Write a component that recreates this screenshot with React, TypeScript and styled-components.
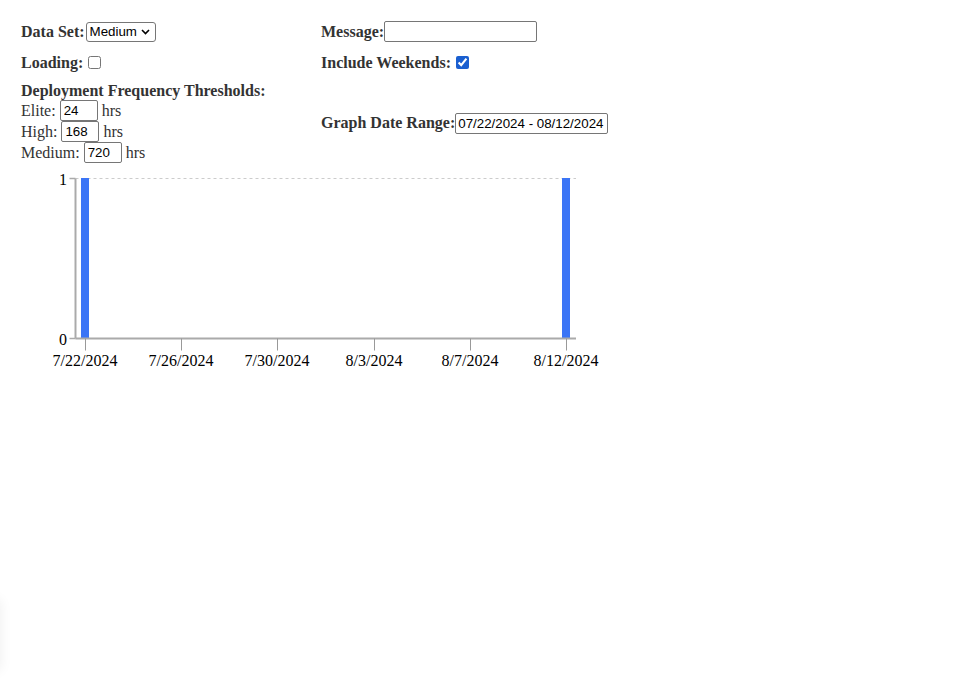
import React, {useState} from 'react';
import styled, {createGlobalStyle} from "styled-components";

const GlobalStyle = createGlobalStyle`
  body {
    margin: 8px;
    background: #fff;
    font-family: "Liberation Serif", "Times New Roman", serif;
    font-size: 16px;
    color: #000;
  }
`

type Tick = {
    x: number
    label: string
}

// pixel places of the ticks, taken as the chart draws them
const xTicks: Tick[] = [
    {x: 64, label: '7/22/2024'},
    {x: 160, label: '7/26/2024'},
    {x: 256, label: '7/30/2024'},
    {x: 353, label: '8/3/2024'},
    {x: 449, label: '8/7/2024'},
    {x: 545, label: '8/12/2024'},
]

const bars = [64, 545]

const Chart = () => {
    const left = 54.5
    const right = 555
    const top = 13.5
    const bottom = 173.5
    return (
        <ChartSvg width={600} height={210}>
            <line x1={left} x2={right} y1={top} y2={top} stroke="#ccc" strokeDasharray="3 3"/>
            {bars.map(x => <rect key={x} x={x - 4} y={top - 0.5} width={8} height={bottom - top + 0.5} fill="#3b75f6"/>)}
            <line x1={left} x2={left} y1={top} y2={bottom} stroke="#aaa" strokeWidth={2}/>
            <line x1={left - 6} x2={left} y1={top} y2={top} stroke="#aaa" strokeWidth={1.5}/>
            <line x1={left - 6} x2={left} y1={bottom} y2={bottom} stroke="#aaa" strokeWidth={1.5}/>
            <AxisText x={46} y={top + 6} textAnchor="end">1</AxisText>
            <AxisText x={46} y={bottom + 6} textAnchor="end">0</AxisText>
            <line x1={left} x2={right} y1={bottom} y2={bottom} stroke="#aaa" strokeWidth={2}/>
            {xTicks.map(t => (
                <g key={t.label}>
                    <line x1={t.x + 0.5} x2={t.x + 0.5} y1={bottom} y2={bottom + 12} stroke="#999"/>
                    <AxisText x={t.x} y={bottom + 27} textAnchor="middle">{t.label}</AxisText>
                </g>
            ))}
        </ChartSvg>
    )
}

const App = () => {
    const [dataSet, setDataSet] = useState('medium')
    const [loading, setLoading] = useState(false)
    const [weekends, setWeekends] = useState(true)
    const [message, setMessage] = useState('')
    const [elite, setElite] = useState('24')
    const [high, setHigh] = useState('168')
    const [medium, setMedium] = useState('720')

    return (
        <Page>
            <GlobalStyle/>
            <Controls>
                <Field>
                    <Label>Data Set:</Label>
                    <SelectWrap>
                        <Select value={dataSet} onChange={e => setDataSet(e.target.value)}>
                            <option value="small">Small</option>
                            <option value="medium">Medium</option>
                            <option value="large">Large</option>
                        </Select>
                        <Chevron width="9" height="6" viewBox="0 0 9 6">
                            <path d="M1 1l3.5 3.5L8 1" fill="none" stroke="#000" strokeWidth="1.6"/>
                        </Chevron>
                    </SelectWrap>
                </Field>
                <Field>
                    <Label>Message:</Label>
                    <TextInput value={message} onChange={e => setMessage(e.target.value)}/>
                </Field>
                <Field>
                    <Label>Loading:</Label>
                    <Check type="checkbox" checked={loading} onChange={() => setLoading(!loading)}/>
                </Field>
                <Field>
                    <Label>Include Weekends:</Label>
                    <Check type="checkbox" checked={weekends} onChange={() => setWeekends(!weekends)}/>
                </Field>
                <Thresholds>
                    <Heading>Deployment Frequency Thresholds:</Heading>
                    <ThresholdRow>Elite: <SmallInput value={elite} onChange={e => setElite(e.target.value)}/> hrs</ThresholdRow>
                    <ThresholdRow>High: <SmallInput value={high} onChange={e => setHigh(e.target.value)}/> hrs</ThresholdRow>
                    <ThresholdRow>Medium: <SmallInput value={medium} onChange={e => setMedium(e.target.value)}/> hrs</ThresholdRow>
                </Thresholds>
                <Field>
                    <Label>Graph Date Range:</Label>
                    <TextInput value="07/22/2024 - 08/12/2024" readOnly/>
                </Field>
            </Controls>
            <Chart/>
            <Toast/>
        </Page>
    );
};

export default App

const Page = styled.div`
  padding: 13px 13px 0;
`

const Controls = styled.div`
  display: grid;
  grid-template-columns: 300px 300px;
  row-gap: 10px;
  align-items: center;
`

const Field = styled.div`
  display: flex;
  align-items: center;
  height: 21px;
`

const Label = styled.span`
  font-weight: bold;
  color: #333;
  line-height: 18px;
`

const Heading = styled(Label)`
  line-height: 16px;
  margin-bottom: 1px;
`

const SelectWrap = styled.span`
  position: relative;
  display: inline-flex;
`

const Select = styled.select`
  appearance: none;
  font-family: "Liberation Sans", Arial, sans-serif;
  font-size: 13.33px;
  color: #000;
  background: #fff;
  border: 1px solid #767676;
  border-radius: 3px;
  height: 20px;
  width: 70px;
  padding: 0 0 0 3px;
  margin: 0 0 0 1px;
  outline: none;
`

const Chevron = styled.svg`
  position: absolute;
  right: 6px;
  top: 7px;
  pointer-events: none;
`

const TextInput = styled.input`
  font-family: "Liberation Sans", Arial, sans-serif;
  font-size: 13.33px;
  color: #000;
  width: 153px;
  height: 21px;
  box-sizing: border-box;
  border: 1px solid #767676;
  border-radius: 2px;
  padding: 1px 2px;
  margin: 0;
  outline: none;
`

const Check = styled.input`
  width: 13px;
  height: 13px;
  margin: 0 0 0 5px;
  accent-color: #1a5fd0;
`

const Thresholds = styled.div`
  display: flex;
  flex-direction: column;
  color: #333;
`

const ThresholdRow = styled.div`
  display: flex;
  align-items: center;
  height: 21px;
  white-space: pre;
`

const SmallInput = styled.input`
  font-family: "Liberation Sans", Arial, sans-serif;
  font-size: 13.33px;
  color: #000;
  width: 38px;
  height: 21px;
  box-sizing: border-box;
  border: 1px solid #767676;
  border-radius: 2px;
  padding: 1px 3px;
  margin: 0;
  outline: none;
`

const ChartSvg = styled.svg`
  display: block;
  margin-top: 2px;
  overflow: visible;
`

const AxisText = styled.text`
  font-family: "Liberation Serif", "Times New Roman", serif;
  font-size: 16px;
  fill: #000;
`

const Toast = styled.div`
  position: fixed;
  left: -300px;
  top: 600px;
  width: 300px;
  height: 70px;
  background: #fff;
  box-shadow: 0 0 12px rgba(0, 0, 0, 0.07);
`
